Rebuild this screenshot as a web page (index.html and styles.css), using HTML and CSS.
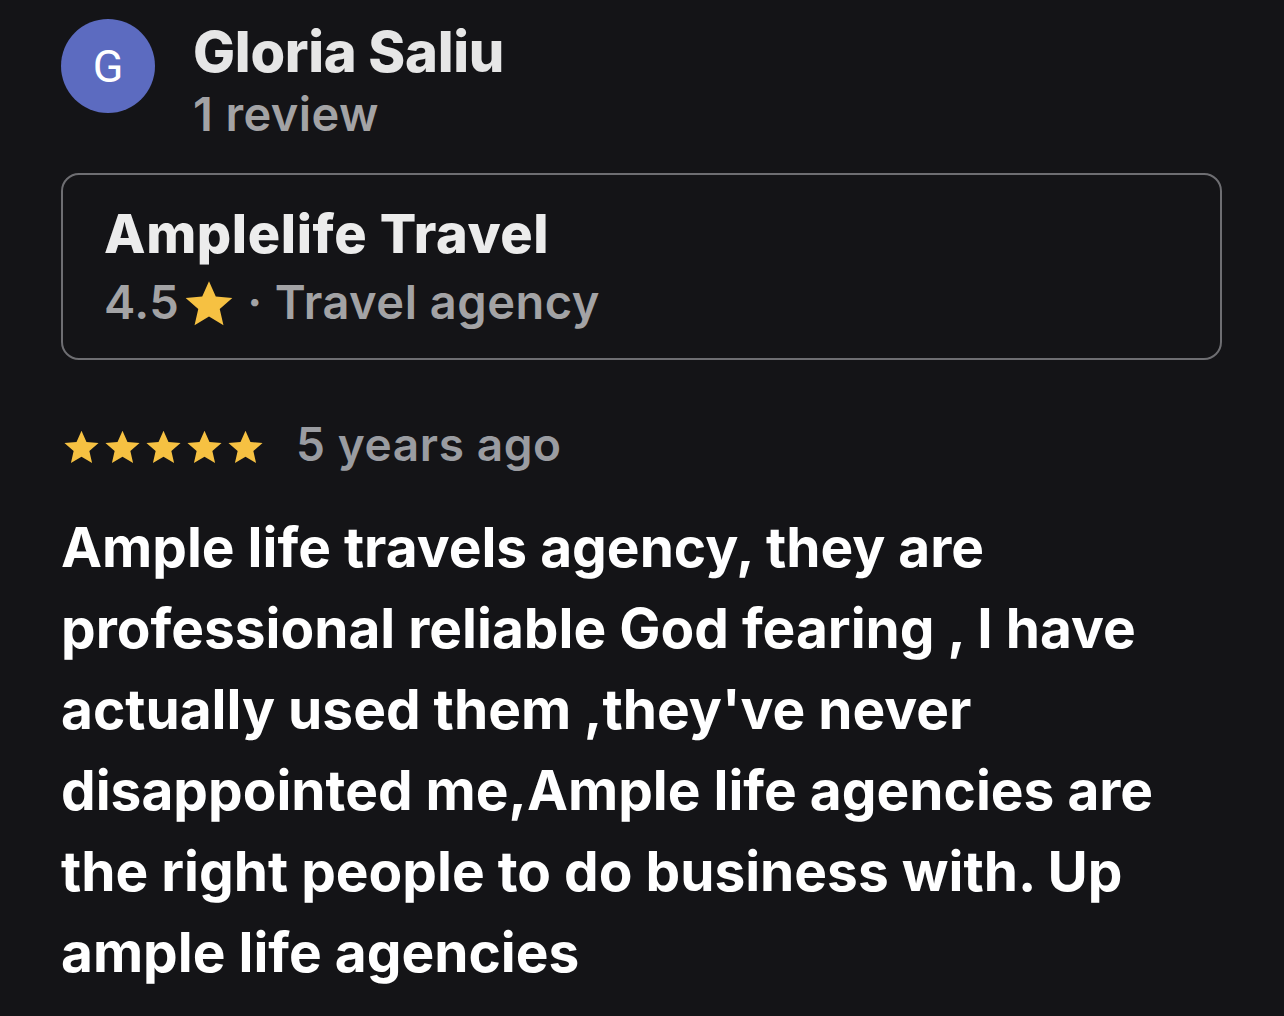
FILE: index.html
```html
<!DOCTYPE html>
<html lang="en">
<head>
<meta charset="utf-8">
<title>Review</title>
<link rel="stylesheet" href="styles.css">
</head>
<body>
<div class="review">
  <div class="author">
    <div class="avatar">G</div>
    <div class="author-info">
      <div class="author-name">Gloria Saliu</div>
      <div class="author-meta">1 review</div>
    </div>
  </div>
  <div class="place">
    <div class="place-name">Amplelife Travel</div>
    <div class="place-meta">4.5<svg class="star-small" viewBox="0 0 24 24"><path d="M12 2.2l2.9 6.6 7.1.6-5.4 4.7 1.6 7-6.2-3.7-6.2 3.7 1.6-7L2 9.4l7.1-.6z"/></svg><span class="sep">·</span>Travel agency</div>
  </div>
  <div class="rating">
    <div class="stars">
      <svg class="star" viewBox="0 0 24 24"><path d="M12 2.2l2.9 6.6 7.1.6-5.4 4.7 1.6 7-6.2-3.7-6.2 3.7 1.6-7L2 9.4l7.1-.6z"/></svg>
      <svg class="star" viewBox="0 0 24 24"><path d="M12 2.2l2.9 6.6 7.1.6-5.4 4.7 1.6 7-6.2-3.7-6.2 3.7 1.6-7L2 9.4l7.1-.6z"/></svg>
      <svg class="star" viewBox="0 0 24 24"><path d="M12 2.2l2.9 6.6 7.1.6-5.4 4.7 1.6 7-6.2-3.7-6.2 3.7 1.6-7L2 9.4l7.1-.6z"/></svg>
      <svg class="star" viewBox="0 0 24 24"><path d="M12 2.2l2.9 6.6 7.1.6-5.4 4.7 1.6 7-6.2-3.7-6.2 3.7 1.6-7L2 9.4l7.1-.6z"/></svg>
      <svg class="star" viewBox="0 0 24 24"><path d="M12 2.2l2.9 6.6 7.1.6-5.4 4.7 1.6 7-6.2-3.7-6.2 3.7 1.6-7L2 9.4l7.1-.6z"/></svg>
    </div>
    <div class="date">5 years ago</div>
  </div>
  <p class="text">Ample life travels agency, they are professional reliable God fearing , I have actually used them ,they've never disappointed me,Ample life agencies are the right people to do business with. Up ample life agencies</p>
</div>
</body>
</html>
```
FILE: styles.css
```css
html, body {
  margin: 0;
  padding: 0;
  background: #141417;
}
body {
  font-family: Inter, "Noto Sans", sans-serif;
  color: #ffffff;
}
.review {
  padding: 19px 62px 0 61px;
}
.author {
  display: flex;
  align-items: flex-start;
  gap: 38px;
}
.avatar {
  width: 94px;
  height: 94px;
  border-radius: 50%;
  background: #5c6bc0;
  color: #fff;
  font-family: Roboto, sans-serif;
  font-size: 45px;
  display: flex;
  align-items: center;
  justify-content: center;
  flex: none;
}
.author-info {
  padding-top: 3px;
}
.author-name {
  font-size: 56px;
  font-weight: 800;
  color: #e6e6e6;
  line-height: 60px;
  letter-spacing: -0.3px;
}
.author-meta {
  font-size: 47px;
  font-weight: 600;
  color: #a3a3a5;
  line-height: 63px;
  letter-spacing: 0.4px;
}
.place {
  margin-top: 28px;
  border: 2px solid #6e6e72;
  border-radius: 18px;
  padding: 26px 40px 21px 41px;
}
.place-name {
  font-size: 54px;
  font-weight: 800;
  color: #ececec;
  line-height: 66px;
  letter-spacing: 0.6px;
}
.place-meta {
  font-size: 47px;
  font-weight: 600;
  color: #a3a3a5;
  line-height: 70px;
  display: flex;
  align-items: center;
  letter-spacing: 0.5px;
}
.star-small {
  width: 56px;
  height: 56px;
  fill: #f6c142;
  margin: 4px 0 0 2px;
}
.sep {
  margin: 0 12px 0 10px;
}
.rating {
  margin-top: 57px;
  display: flex;
  align-items: center;
  gap: 30px;
}
.stars {
  display: flex;
  margin-top: 6px;
}
.star {
  width: 41px;
  height: 41px;
  fill: #f6c142;
}
.date {
  font-size: 46px;
  font-weight: 600;
  color: #9a9ca1;
  line-height: 54px;
  letter-spacing: 0.6px;
}
.text {
  margin: 36px 0 0 0;
  font-size: 55px;
  font-weight: 700;
  line-height: 81px;
  color: #ffffff;
}
```
